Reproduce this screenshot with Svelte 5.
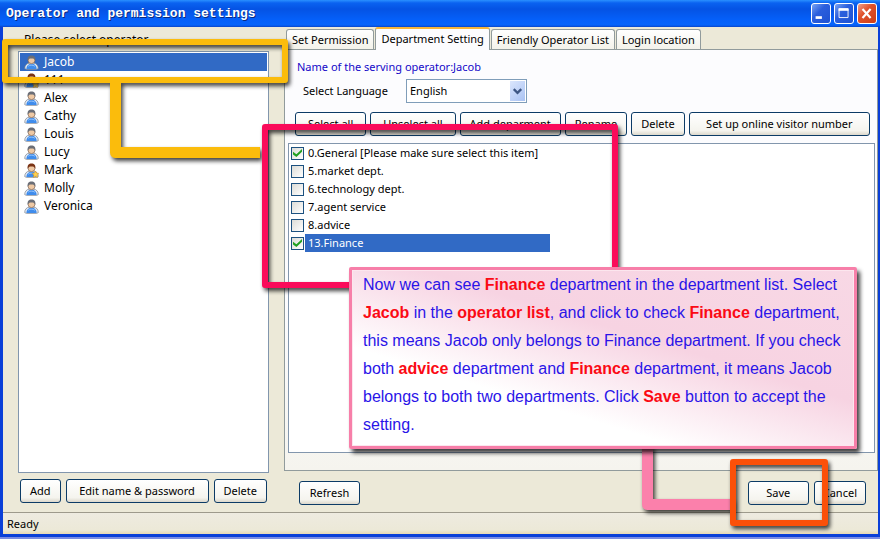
<script>
  let selected = $state("Jacob")
  let activeTab = $state("Department Setting")
  let language = $state("English")
  let highlighted = $state("13.Finance")

  const operators = [
    { name: "Jacob" },
    { name: "111", admin: true },
    { name: "Alex" },
    { name: "Cathy" },
    { name: "Louis" },
    { name: "Lucy" },
    { name: "Mark", admin: true },
    { name: "Molly" },
    { name: "Veronica" }
  ]

  const tabs = ["Set Permission", "Department Setting", "Friendly Operator List", "Login location"]

  let departments = $state([
    { name: "0.General [Please make sure select this item]", checked: true },
    { name: "5.market dept.", checked: false },
    { name: "6.technology dept.", checked: false },
    { name: "7.agent service", checked: false },
    { name: "8.advice", checked: false },
    { name: "13.Finance", checked: true }
  ])

  const checkAll = value => departments.forEach(d => d.checked = value)
</script>

<div class="window">
  <header class="titlebar">
    <h1>Operator and permission settings</h1>
    <div class="controls">
      <button class="control" aria-label="Minimize">
        <svg viewBox="0 0 20 20"><path d="M4 14.500h7" stroke="#fff" stroke-width="3" /></svg>
      </button>
      <button class="control" aria-label="Maximize">
        <svg viewBox="0 0 20 20"><path d="M4.500 5v9.500h10V5" fill="none" stroke="#fff" /><path d="M4 5.500h11" stroke="#fff" stroke-width="3" /></svg>
      </button>
      <button class="control close" aria-label="Close">
        <svg viewBox="0 0 20 20"><path d="M5 5l9 10M14 5l-9 10" stroke="#fff" stroke-width="2.400" /></svg>
      </button>
    </div>
  </header>

  <main>
    <section class="operators">
      <div class="caption" id="operators-caption">Please select operator</div>
      <ul class="operator-list" aria-labelledby="operators-caption">
        {#each operators as operator}
          <li>
            <button class="operator" class:selected={selected === operator.name} onclick={() => selected = operator.name}>
              <svg class="person" viewBox="0 0 16 16">
                <path d="M.8 14.500c0-3.500 2-5.500 5.200-6h4c3.200.5 5.200 2.500 5.200 6l-1.700.8h-11z" fill="#eef2f8" stroke="#77808f" stroke-width=".8" />
                <path d="M2.500 14.800c0-3.500 2-5.600 5.500-5.600s5.500 2.100 5.500 5.600z" fill="#3f8cec" />
                <path d="M4.500 12c1-1.500 5-1.800 7 0" fill="none" stroke="#9cc8fb" />
                <circle cx="8" cy="5.500" r="3.700" fill="#efc9a4" stroke="#775b4c" stroke-width=".7" />
                <path d="M4 6.200C3.200 2.500 5.200.6 8 .6s4.800 1.900 4 5.600C11.200 4 10 3.600 8 3.700 6 3.600 4.800 4 4 6.200z" fill={operator.admin ? "#7a3315" : "#6b6e76"} />
                {#if operator.admin}
                  <path d="M12.300 8.500l1.100 2.200 2.500.4-1.800 1.800.4 2.600-2.200-1.200-2.300 1.200.5-2.600-1.900-1.800 2.600-.4z" fill="#ffd04d" stroke="#c98a1b" stroke-width=".5" />
                {/if}
              </svg>
              <span>{operator.name}</span>
            </button>
          </li>
        {/each}
      </ul>
      <div class="list-actions">
        <button class="btn">Add</button>
        <button class="btn wide">Edit name &amp; password</button>
        <button class="btn">Delete</button>
      </div>
    </section>

    <section class="settings">
      <div class="tabs" role="tablist">
        {#each tabs as tab}
          <button class="tab" class:active={activeTab === tab} role="tab" aria-selected={activeTab === tab} onclick={() => activeTab = tab}>{tab}</button>
        {/each}
      </div>
      <div class="panel">
        <p class="serving">Name of the serving operator:{selected}</p>
        <div class="language">
          <label for="language">Select Language</label>
          <div class="dropdown">
            <select id="language" bind:value={language}>
              <option>English</option>
            </select>
            <svg viewBox="0 0 16 20"><path d="M4 8l4 4 4-4" fill="none" stroke="#3d5684" stroke-width="2.400" /></svg>
          </div>
        </div>
        <div class="toolbar">
          <button class="btn medium" onclick={() => checkAll(true)}>Select all</button>
          <button class="btn medium" onclick={() => checkAll(false)}>Unselect all</button>
          <button class="btn">Add deparment</button>
          <button class="btn">Rename</button>
          <button class="btn">Delete</button>
          <button class="btn grow">Set up online visitor number</button>
        </div>
        <div class="departments">
          {#each departments as department}
            <label class="department" class:selected={highlighted === department.name}>
              <input type="checkbox" bind:checked={department.checked} onchange={() => highlighted = department.name} />
              <span>{department.name}</span>
            </label>
          {/each}
        </div>
      </div>
      <div class="actions">
        <button class="btn action">Refresh</button>
        <button class="btn action save">Save</button>
        <button class="btn">Cancel</button>
      </div>
    </section>
  </main>

  <footer>Ready</footer>

  <!-- tutorial marks over the dialog -->
  <svg class="marks" width="880" height="539" fill="none" stroke-linejoin="round">
    <g class="mark">
      <path d="M115.500 80v72.500H260" stroke="#fbbc0c" stroke-width="11" />
      <rect x="5" y="42" width="280" height="38" stroke="#fbbc0c" stroke-width="6" />
    </g>
    <rect class="mark" x="265" y="127" width="350" height="158" stroke="#fa0b5a" stroke-width="6" />
    <path class="mark" d="M647.500 446v58.500H733" stroke="#fb80ab" stroke-width="11" />
    <rect class="mark" x="733" y="462" width="92" height="61" stroke="#fb5009" stroke-width="6" />
  </svg>
  <aside class="callout">
    Now we can see <em>Finance</em> department in the department list. Select<br />
    <em>Jacob</em> in the <em>operator list</em>, and click to check <em>Finance</em> department,<br />
    this means Jacob only belongs to Finance department. If you check<br />
    both <em>advice</em> department and <em>Finance</em> department, it means Jacob<br />
    belongs to both two departments. Click <em>Save</em> button to accept the<br />
    setting.
  </aside>
</div>

<style>
  :global(body) {
    margin: 0;
    background: #7b8ce2;
  }

  * {
    box-sizing: border-box;
  }

  .window {
    position: relative;
    margin-bottom: 2px;
    border: solid #0a3fd8;
    border-width: 0 2px 3px 3px;
    background: #ece9d8;
    font: 11px/18px "Noto Sans", sans-serif;
    color: #000;
  }

  button, select {
    font: inherit;
    color: inherit;
    margin: 0;
  }

  .titlebar {
    display: flex;
    align-items: center;
    justify-content: space-between;
    height: 27px;
    margin: 0 -2px 0 -3px;
    padding: 0 3px 0 6px;
    background: linear-gradient(#2a90ff 0, #0a62f0 3px, #0553e4 9px, #0560fa 20px, #0664fb 25px, #0a45c8 27px);
  }

  h1 {
    margin: 0;
    font: bold 13px/18px "Liberation Mono", monospace;
    color: #fff;
    text-shadow: 1px 1px #0a2a80;
  }

  .controls {
    display: flex;
    gap: 3px;
  }

  .control {
    width: 20px;
    height: 21px;
    padding: 0;
    border: 1px solid #fff;
    border-radius: 3px;
    background: linear-gradient(135deg, #7aa5f4, #2b5fdd 40%, #1e52d2);
  }

  .control.close {
    background: linear-gradient(135deg, #f0a08a, #e0522c 40%, #cc3d16);
  }

  .control svg {
    display: block;
    width: 100%;
    height: 100%;
  }

  main {
    display: flex;
    gap: 15px;
    padding-left: 15px;
  }

  .operators {
    display: flex;
    flex-direction: column;
    width: 251px;
    flex: none;
  }

  .caption {
    height: 24px;
    padding: 4px 6px 0;
    font-size: 12px;
  }

  .operator-list {
    flex: 1;
    margin: 0;
    padding: 1px;
    border: 1px solid #8296ad;
    background: #fff;
    list-style: none;
    font-size: 12px;
  }

  .operator {
    display: flex;
    align-items: center;
    gap: 5px;
    width: 100%;
    height: 18px;
    padding: 0 4px;
    border: none;
    background: none;
    text-align: left;
  }

  .operator.selected {
    background: #316ac5;
    color: #fff;
  }

  .person {
    width: 15px;
    height: 15px;
  }

  .list-actions {
    display: flex;
    gap: 5px;
    padding: 6px 2px 9px;
  }

  .btn {
    height: 24px;
    padding: 0 9px;
    border: 1px solid #0c3b66;
    border-radius: 3px;
    background: linear-gradient(#fff, #f5f4ee 80%, #dcd8cc);
    white-space: nowrap;
  }

  .btn.medium {
    padding: 0 12px;
  }

  .btn.wide, .btn.grow {
    flex: 1;
  }

  .settings {
    flex: 1;
    min-width: 0;
  }

  .tabs {
    display: flex;
    align-items: flex-end;
    gap: 1px;
    height: 22px;
    padding-left: 2px;
  }

  .tab {
    height: 20px;
    padding: 0 5px;
    border: 1px solid #919b9c;
    border-bottom: none;
    border-radius: 3px 3px 0 0;
    background: linear-gradient(#fff, #f3f2ea);
    white-space: nowrap;
  }

  .tab.active {
    z-index: 1;
    height: 23px;
    margin-bottom: -1px;
    padding-bottom: 2px;
    border-top: 2px solid #f5b53a;
    background: #fcfcfe;
  }

  .panel {
    padding: 9px 2px 17px 3px;
    border: 1px solid #919b9c;
    background: linear-gradient(#fcfcfe 60%, #f5f4ee);
  }

  .serving {
    margin: 0;
    padding-left: 9px;
    line-height: 16px;
    color: #1408c8;
  }

  .language {
    display: flex;
    align-items: center;
    gap: 16px;
    margin-top: 4px;
    padding-left: 15px;
  }

  .language label {
    width: 87px;
    white-space: nowrap;
  }

  .dropdown {
    position: relative;
    width: 121px;
    height: 24px;
  }

  .dropdown select {
    width: 100%;
    height: 100%;
    padding: 0 3px;
    border: 1px solid #7f9db9;
    border-radius: 0;
    appearance: none;
    background: #fff;
  }

  .dropdown svg {
    position: absolute;
    top: 2px;
    right: 2px;
    width: 15px;
    height: 20px;
    background: linear-gradient(135deg, #dbe6fd, #a9c2f3);
    pointer-events: none;
  }

  .toolbar {
    display: flex;
    gap: 4px;
    margin: 9px 5px 7px 7px;
  }

  .departments {
    height: 310px;
    padding: 0 2px;
    border: 1px solid #8296ad;
    background: #fff;
  }

  .department {
    display: flex;
    align-items: center;
    gap: 1px;
    height: 18px;
    white-space: nowrap;
  }

  .department span {
    width: 245px;
    padding-left: 3px;
  }

  .department.selected span {
    background: #316ac5;
    color: #fff;
  }

  .department input {
    display: grid;
    place-items: center;
    width: 13px;
    height: 13px;
    margin: 0;
    border: 1px solid #1c5180;
    appearance: none;
    background: linear-gradient(135deg, #dcdcd7, #fff);
  }

  .department input:checked::before {
    content: "";
    width: 9px;
    height: 8px;
    background: #21a121;
    clip-path: polygon(0 35%, 38% 65%, 100% 0, 100% 35%, 38% 100%, 0 70%);
  }

  .actions {
    display: flex;
    align-items: center;
    gap: 5px;
    height: 41px;
    padding: 2px 12px 0 15px;
  }

  .actions .btn {
    padding: 0 8px;
  }

  .action {
    width: 61px;
  }

  .save {
    margin-left: auto;
  }

  footer {
    height: 22px;
    padding: 2px 4px;
    border-top: 1px solid #9d9a8c;
    background: linear-gradient(#eeebe0, #ece9d8 80%, #e8d9b4);
  }

  .marks {
    position: absolute;
    z-index: 2;
    top: 0;
    left: -3px;
    pointer-events: none;
  }

  .mark {
    filter: drop-shadow(2px 3px 2px rgb(0 0 0 / 75%));
  }

  .callout {
    position: absolute;
    z-index: 3;
    top: 267px;
    left: 346px;
    width: 508px;
    height: 182px;
    padding: 1px 4px 0 11px;
    border: 3px solid #f77fa9;
    border-radius: 2px;
    background: linear-gradient(197deg, #f8d8e5, #f7d3e2 40%, #fff 70%);
    box-shadow: 3px 4px 4px rgb(0 0 0 / 75%), inset 0 0 0 1px #fce6ee;
    font: 16px/28px "Liberation Sans", Arial, sans-serif;
    color: #2a14e8;
    white-space: nowrap;
  }

  .callout em {
    font-style: normal;
    font-weight: bold;
    color: #fb0a14;
  }
</style>
